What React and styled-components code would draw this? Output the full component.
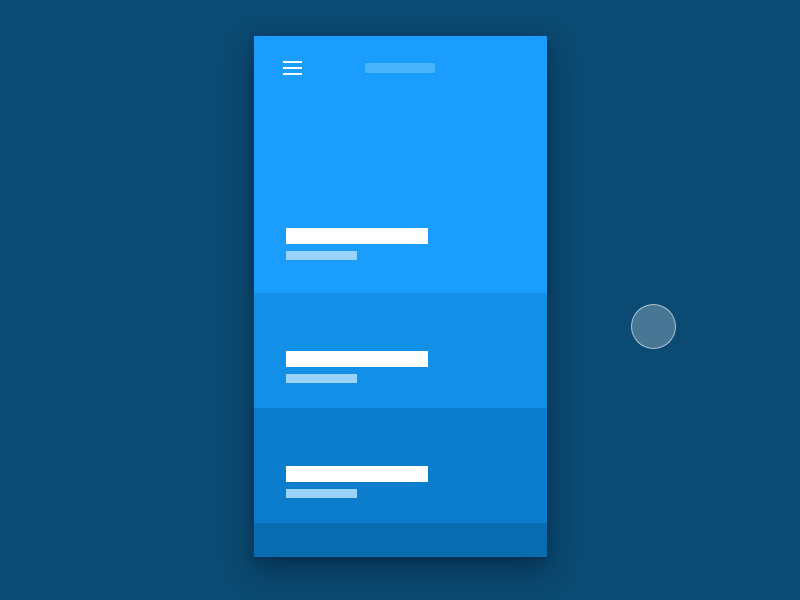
import React from "react";
import styled, { createGlobalStyle } from "styled-components";

const Global = createGlobalStyle`
  html, body { margin: 0; padding: 0; background: #0b4a72; font-family: "Liberation Sans", Arial, sans-serif; }
`;

const Stage = styled.div`
  position: relative;
  width: 800px;
  height: 600px;
  background: #0b4a72;
  overflow: hidden;
  display: flex;
  align-items: flex-start;
  padding: 36px 0 0 254px;
  box-sizing: border-box;
`;

const Phone = styled.div`
  width: 293px;
  height: 521px;
  display: flex;
  flex-direction: column;
  box-shadow: 0 12px 28px rgba(0, 20, 40, 0.45), 0 2px 6px rgba(0, 20, 40, 0.25);
`;

const Header = styled.div`
  height: 257px;
  background: #1a9dfd;
  display: flex;
  flex-direction: column;
  padding: 0 0 33px 32px;
  box-sizing: border-box;
`;

const Toolbar = styled.div`
  display: flex;
  align-items: center;
  height: 62px;
  padding-top: 1px;
  box-sizing: border-box;
`;

const Burger = styled.div`
  width: 19px;
  display: flex;
  flex-direction: column;
  gap: 4px;
  margin-left: -3px;
  span {
    height: 2px;
    background: #ffffff;
  }
`;

const TitleBar = styled.div`
  width: 70px;
  height: 10px;
  background: #4bb5fb;
  margin-left: 63px;
`;

const Spacer = styled.div`
  flex: 1;
`;

const Section = styled.div`
  height: ${(p) => p.$h}px;
  background: ${(p) => p.$bg};
  display: flex;
  flex-direction: column;
  justify-content: flex-end;
  padding: 0 0 ${(p) => p.$pb}px 32px;
  box-sizing: border-box;
`;

const Primary = styled.div`
  width: 142px;
  height: 16px;
  background: #ffffff;
`;

const Secondary = styled.div`
  width: 71px;
  height: 9px;
  margin-top: 7px;
  background: #9ad3fc;
`;

const Touch = styled.div`
  position: absolute;
  left: 631px;
  top: 304px;
  width: 45px;
  height: 45px;
  box-sizing: border-box;
  border-radius: 50%;
  background: rgba(255, 255, 255, 0.25);
  border: 1px solid rgba(255, 255, 255, 0.55);
`;

const Item = () => (
  <>
    <Primary />
    <Secondary />
  </>
);

export default function App() {
  return (
    <>
      <Global />
      <Stage>
        <Phone>
          <Header>
            <Toolbar>
              <Burger>
                <span />
                <span />
                <span />
              </Burger>
              <TitleBar />
            </Toolbar>
            <Spacer />
            <Item />
          </Header>
          <Section $h={115} $bg="#1290e8" $pb={25}>
            <Item />
          </Section>
          <Section $h={115} $bg="#0b7dcc" $pb={25}>
            <Item />
          </Section>
          <Section $h={34} $bg="#086cb0" $pb={0} />
        </Phone>
        <Touch />
      </Stage>
    </>
  );
}
